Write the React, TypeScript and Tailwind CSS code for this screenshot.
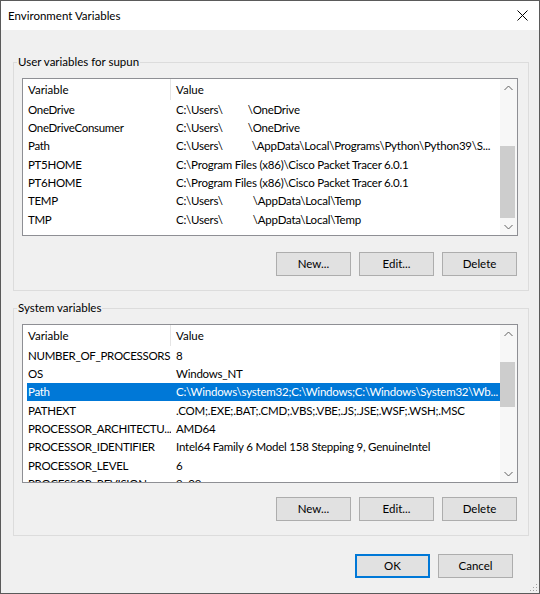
type Row = {
  name: string
  value: string
  blank?: number
  rest?: string
  selected?: boolean
}

const userRows: Row[] = [
  { name: 'OneDrive', value: 'C:\\Users\\', blank: 25, rest: '\\OneDrive' },
  { name: 'OneDriveConsumer', value: 'C:\\Users\\', blank: 25, rest: '\\OneDrive' },
  { name: 'Path', value: 'C:\\Users\\', blank: 29, rest: '\\AppData\\Local\\Programs\\Python\\Python39\\S...' },
  { name: 'PT5HOME', value: 'C:\\Program Files (x86)\\Cisco Packet Tracer 6.0.1' },
  { name: 'PT6HOME', value: 'C:\\Program Files (x86)\\Cisco Packet Tracer 6.0.1' },
  { name: 'TEMP', value: 'C:\\Users\\', blank: 30, rest: '\\AppData\\Local\\Temp' },
  { name: 'TMP', value: 'C:\\Users\\', blank: 30, rest: '\\AppData\\Local\\Temp' },
]

const systemRows: Row[] = [
  { name: 'NUMBER_OF_PROCESSORS', value: '8' },
  { name: 'OS', value: 'Windows_NT' },
  { name: 'Path', value: 'C:\\Windows\\system32;C:\\Windows;C:\\Windows\\System32\\Wb...', selected: true },
  { name: 'PATHEXT', value: '.COM;.EXE;.BAT;.CMD;.VBS;.VBE;.JS;.JSE;.WSF;.WSH;.MSC' },
  { name: 'PROCESSOR_ARCHITECTU...', value: 'AMD64' },
  { name: 'PROCESSOR_IDENTIFIER', value: 'Intel64 Family 6 Model 158 Stepping 9, GenuineIntel' },
  { name: 'PROCESSOR_LEVEL', value: '6' },
  { name: 'PROCESSOR_REVISION', value: '9e09' },
]

function Chevron({ up }: { up?: boolean }) {
  return (
    <svg width="9" height="6" viewBox="0 0 9 6" className="text-[#606060]">
      <polyline
        points={up ? '0.5,5 4.5,1 8.5,5' : '0.5,1 4.5,5 8.5,1'}
        fill="none"
        stroke="currentColor"
        strokeWidth="1"
      />
    </svg>
  )
}

function Scrollbar({ thumbTop, thumbHeight }: { thumbTop: number; thumbHeight: number }) {
  return (
    <div className="flex w-[17px] shrink-0 flex-col bg-[#f7f7f7]">
      <div className="flex h-[17px] items-center justify-center">
        <Chevron up />
      </div>
      <div className="flex-1">
        <div className="w-[15px] bg-[#cdcdcd]" style={{ marginTop: thumbTop, height: thumbHeight }} />
      </div>
      <div className="flex h-[17px] items-center justify-center">
        <Chevron />
      </div>
    </div>
  )
}

function VarList({
  rows,
  height,
  thumbTop,
  thumbHeight,
}: {
  rows: Row[]
  height: number
  thumbTop: number
  thumbHeight: number
}) {
  return (
    <div className="flex min-w-0 border border-[#8e8f94] bg-white" style={{ height }}>
      <div className="flex min-w-0 flex-1 flex-col overflow-hidden">
        <div className="ml-[4px] flex h-[21px] shrink-0 items-center">
          <div className="flex h-full w-[144px] items-center border-r border-[#e5e5e5] pl-[1px]">Variable</div>
          <div className="pl-[5px]">Value</div>
        </div>
        {rows.map((r) => (
          <div
            key={r.name}
            className={`ml-[4px] flex h-[18.33px] shrink-0 items-center whitespace-nowrap ${
              r.selected ? 'bg-[#0078d7] text-white' : ''
            }`}
          >
            <div className="w-[144px] shrink-0 overflow-hidden pl-[1px] tracking-[-0.3px]">{r.name}</div>
            <div className="min-w-0 flex-1 overflow-hidden text-ellipsis pl-[5px] pr-[1px] tracking-[-0.22px]">
              {r.value}
              {r.blank !== undefined && <span className="inline-block" style={{ width: r.blank }} />}
              {r.rest}
            </div>
          </div>
        ))}
      </div>
      <Scrollbar thumbTop={thumbTop} thumbHeight={thumbHeight} />
    </div>
  )
}

function WinButton({ label, isDefault }: { label: string; isDefault?: boolean }) {
  return (
    <button
      className={`flex h-[24px] w-[75px] items-center justify-center bg-[#e1e1e1] text-black ${
        isDefault ? 'border-2 border-[#0078d7]' : 'border border-[#adadad]'
      }`}
    >
      {label}
    </button>
  )
}

function Group({ title, children }: { title: string; children: React.ReactNode }) {
  return (
    <fieldset className="min-w-0 border border-[#dcdcdc] pb-[14px] pl-[8px] pr-[10px] pt-[8px]">
      <legend className="-ml-[5px] px-[1px] leading-[16px]">{title}</legend>
      {children}
    </fieldset>
  )
}

export default function App() {
  return (
    <div className="relative flex h-[594px] w-[540px] flex-col overflow-hidden border border-[#5a5a5a] bg-[#f0f0f0] font-['Segoe_UI','Lato',sans-serif] text-[11.5px] text-black">
      <div className="flex h-[29px] shrink-0 items-center justify-between bg-white pl-[7px] pr-[11px]">
        <span>Environment Variables</span>
        <svg width="11" height="11" viewBox="0 0 11 11">
          <path d="M0.5 0.5 L10.5 10.5 M10.5 0.5 L0.5 10.5" stroke="#000" strokeWidth="1" />
        </svg>
      </div>

      <div className="flex min-w-0 flex-col pl-[12px] pr-[10px] pt-[24px]">
        <Group title="User variables for supun">
          <VarList rows={userRows} height={158} thumbTop={50} thumbHeight={72} />
          <div className="mt-[16px] flex justify-end gap-[8px] pr-[1px]">
            <WinButton label="New..." />
            <WinButton label="Edit..." />
            <WinButton label="Delete" />
          </div>
        </Group>

        <div className="mt-[9px] min-w-0">
          <Group title="System variables">
            <VarList rows={systemRows} height={159} thumbTop={20} thumbHeight={45} />
            <div className="mt-[14px] flex justify-end gap-[8px] pr-[1px]">
              <WinButton label="New..." />
              <WinButton label="Edit..." />
              <WinButton label="Delete" />
            </div>
          </Group>
        </div>

        <div className="mt-[18px] flex justify-end gap-[8px] pr-[16px]">
          <WinButton label="OK" isDefault />
          <WinButton label="Cancel" />
        </div>
      </div>

      <svg className="absolute bottom-[1px] right-[1px]" width="8" height="8" viewBox="0 0 8 8">
        <rect x="6" y="0" width="1" height="1" fill="#a0a0a0" />
        <rect x="3" y="3" width="1" height="1" fill="#a0a0a0" />
        <rect x="6" y="3" width="1" height="1" fill="#a0a0a0" />
        <rect x="0" y="6" width="1" height="1" fill="#a0a0a0" />
        <rect x="3" y="6" width="1" height="1" fill="#a0a0a0" />
        <rect x="6" y="6" width="1" height="1" fill="#a0a0a0" />
      </svg>
    </div>
  )
}
